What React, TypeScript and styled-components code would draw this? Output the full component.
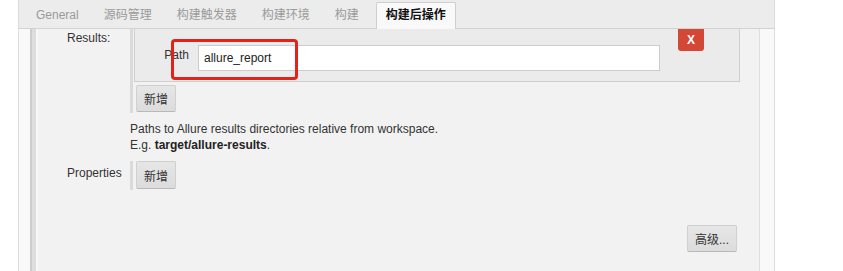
import React from 'react';
import styled, { createGlobalStyle } from 'styled-components';

const GlobalStyle = createGlobalStyle`
  html, body { margin: 0; padding: 0; background: #ffffff; }
  body {
    font-family: "Liberation Sans", Arial, "Noto Sans CJK SC", sans-serif;
    font-size: 12px;
    color: #333333;
  }
`;

// ─── Frame ────────────────────────────────────────────────────────────────────

const Page = styled.div`
  width: 843px;
  height: 271px;
  overflow: hidden;
  background: #ffffff;
`;

const Panel = styled.div`
  margin-left: 18px;
  width: 755px;
  height: 271px;
  display: flex;
  flex-direction: column;
  border-left: 1px solid #dcdcdc;
  border-right: 1px solid #dcdcdc;
  background: #f9f9f9;
`;

// ─── Tabs ─────────────────────────────────────────────────────────────────────

const TabBar = styled.div`
  height: 29px;
  flex-shrink: 0;
  display: flex;
  align-items: flex-end;
  padding-left: 6px;
  background: #ececec;
  border-bottom: 1px solid #d2d2d2;
  box-sizing: border-box;
`;

const Tab = styled.div<{ $active?: boolean }>`
  height: 26px;
  line-height: 24px;
  padding: 0 10px;
  margin-right: 3px;
  margin-bottom: ${({ $active }) => ($active ? '-1px' : '0')};
  font-size: 12px;
  white-space: nowrap;
  box-sizing: border-box;
  color: ${({ $active }) => ($active ? '#111111' : '#9a9a9a')};
  font-weight: ${({ $active }) => ($active ? 700 : 400)};
  background: ${({ $active }) => ($active ? '#f9f9f9' : 'transparent')};
  border: 1px solid ${({ $active }) => ($active ? '#cfcfcf' : 'transparent')};
  border-bottom: none;
  border-radius: 2px 2px 0 0;
  ${({ $active }) => $active && 'height: 27px; padding: 0 9px; margin-left: 3px;'}
`;

// ─── Body ─────────────────────────────────────────────────────────────────────

const Frame = styled.div`
  flex: 1;
  display: flex;
  padding: 0 14px 0 11px;
`;

const Section = styled.div`
  flex: 1;
  display: flex;
  flex-direction: column;
  background: #f2f2f2;
  border-left: 2px solid #cdcdcd;
  border-right: 1px solid #dedede;
  box-shadow: inset 4px 0 0 #dddddd, inset 6px 0 0 #f7f7f7;
  padding-left: 5px;
  padding-right: 19px;
`;

const FieldRow = styled.div<{ $top?: number }>`
  display: flex;
  align-items: flex-start;
  margin-top: ${({ $top }) => $top ?? 0}px;
`;

const FieldLabel = styled.div<{ $pad?: number }>`
  width: 63px;
  padding-left: 30px;
  padding-top: ${({ $pad }) => $pad ?? 0}px;
  line-height: 16px;
  flex-shrink: 0;
  color: #333333;
`;

const FieldValue = styled.div`
  flex: 1;
  min-width: 0;
`;

const Repeated = styled.div`
  border-left: 3px solid #dadada;
  padding-bottom: 1px;
`;

const Chunk = styled.div`
  position: relative;
  display: flex;
  align-items: flex-start;
  margin-left: 1px;
  height: 52px;
  background: #ebebeb;
  border: 1px solid #cfcfcf;
  border-top: none;
`;

const ChunkLabel = styled.div`
  width: 54px;
  margin-top: 15px;
  line-height: 22px;
  text-align: right;
  color: #333333;
  flex-shrink: 0;
`;

const TextInput = styled.input`
  width: 462px;
  height: 26px;
  margin: 16px 0 0 9px;
  padding: 0 5px;
  box-sizing: border-box;
  border: 1px solid #cccccc;
  background: #ffffff;
  font-family: inherit;
  font-size: 12px;
  color: #222222;
  outline: none;
`;

const DeleteButton = styled.button`
  margin-left: 18px;
  width: 26px;
  height: 22px;
  padding: 0;
  border: none;
  border-radius: 0 0 3px 3px;
  background: #d24736;
  color: #ffffff;
  font-family: inherit;
  font-size: 12px;
  font-weight: 700;
  line-height: 20px;
`;

const Annotation = styled.div`
  position: absolute;
  left: 36px;
  top: 10px;
  width: 127px;
  height: 41px;
  box-sizing: border-box;
  border: 3px solid #e2231a;
  border-radius: 4px;
  pointer-events: none;
`;

const GrayButton = styled.button<{ $width: number; $height?: number }>`
  width: ${({ $width }) => $width}px;
  height: ${({ $height }) => $height ?? 27}px;
  padding: 0;
  box-sizing: border-box;
  border: 1px solid #d0d0d0;
  border-bottom-color: #b9b9b9;
  border-radius: 2px;
  background: linear-gradient(#e6e6e6, #dcdcdc);
  font-family: inherit;
  font-size: 12px;
  color: #333333;
`;

const AddSlot = styled.div<{ $top?: number }>`
  padding: ${({ $top }) => $top ?? 3}px 0 0 3px;
`;

const Help = styled.div`
  margin-top: 8px;
  line-height: 16px;
  color: #333333;
  b { color: #222222; }
`;

const ActionRow = styled.div`
  display: flex;
  justify-content: flex-end;
  margin-top: 35px;
  padding-right: 3px;
`;

// ─── Component ────────────────────────────────────────────────────────────────

const tabs = ['General', '源码管理', '构建触发器', '构建环境', '构建', '构建后操作'];

export default function App() {
  return (
    <Page>
      <GlobalStyle />
      <Panel>
        <TabBar>
          {tabs.map((t, i) => (
            <Tab key={t} $active={i === tabs.length - 1}>{t}</Tab>
          ))}
        </TabBar>

        <Frame>
          <Section>
            <FieldRow>
              <FieldLabel $pad={1}>Results:</FieldLabel>
              <FieldValue>
                <Repeated>
                  <Chunk>
                    <ChunkLabel>Path</ChunkLabel>
                    <TextInput defaultValue="allure_report" />
                    <DeleteButton>X</DeleteButton>
                    <Annotation />
                  </Chunk>
                  <AddSlot>
                    <GrayButton $width={40}>新增</GrayButton>
                  </AddSlot>
                </Repeated>
                <Help>
                  Paths to Allure results directories relative from workspace.
                  <br />
                  E.g. <b>target/allure-results</b>.
                </Help>
              </FieldValue>
            </FieldRow>

            <FieldRow $top={8}>
              <FieldLabel $pad={4}>Properties</FieldLabel>
              <FieldValue>
                <Repeated>
                  <AddSlot $top={0}>
                    <GrayButton $width={40} $height={28}>新增</GrayButton>
                  </AddSlot>
                </Repeated>
              </FieldValue>
            </FieldRow>

            <ActionRow>
              <GrayButton $width={50}>高级...</GrayButton>
            </ActionRow>
          </Section>
        </Frame>
      </Panel>
    </Page>
  );
}
